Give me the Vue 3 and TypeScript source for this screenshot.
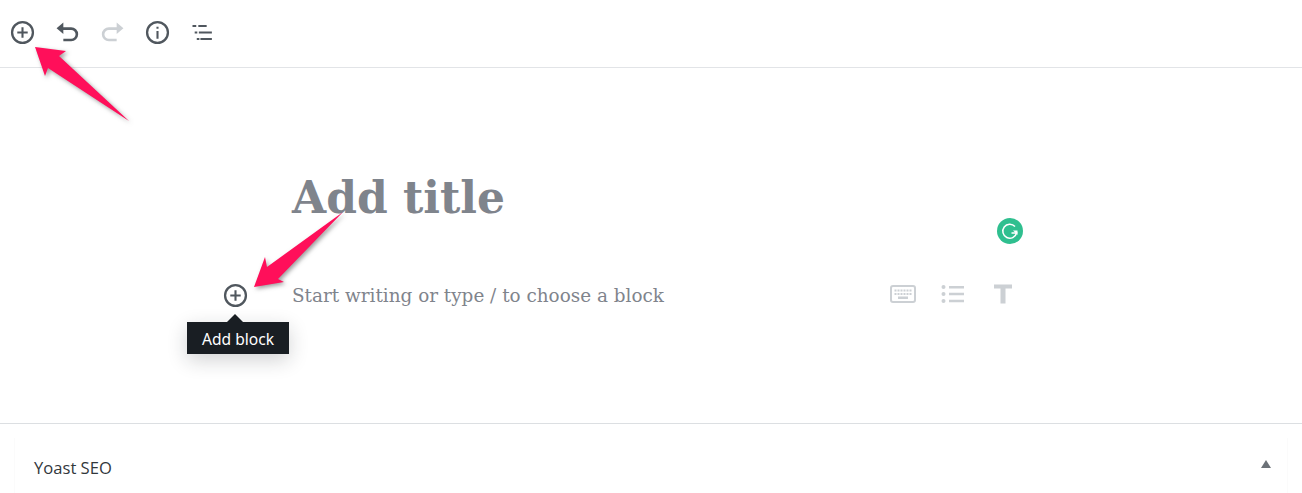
<script setup lang="ts">
interface ToolButton {
  name: string
  disabled?: boolean
}

const tools: ToolButton[] = [
  { name: 'add' },
  { name: 'undo' },
  { name: 'redo', disabled: true },
  { name: 'info' },
  { name: 'outline' },
]
</script>

<template>
  <div class="page">
    <header class="toolbar">
      <button
        v-for="tool in tools"
        :key="tool.name"
        type="button"
        class="tool"
        :class="{ disabled: tool.disabled }"
      >
        <svg v-if="tool.name === 'add'" class="icon" viewBox="0 0 24 24">
          <circle cx="12" cy="12" r="10" fill="none" stroke="currentColor" stroke-width="2.200" />
          <path d="M11 7h2v4h4v2h-4v4h-2v-4H7v-2h4z" fill="currentColor" />
        </svg>
        <svg v-else-if="tool.name === 'undo'" class="icon" viewBox="0 0 24 24">
          <path d="M8 2.500 1.500 8 8 13.500V9.500h7.500a4 4 0 0 1 0 8.500H8v2.500h7.500a6.500 6.500 0 0 0 0-13.500H8z" fill="currentColor" />
        </svg>
        <svg v-else-if="tool.name === 'redo'" class="icon" viewBox="0 0 24 24">
          <path d="M16 2.500 22.500 8 16 13.500V9.500H8.500a4 4 0 0 0 0 8.500H16v2.500H8.500a6.500 6.500 0 0 1 0-13.500H16z" fill="currentColor" />
        </svg>
        <svg v-else-if="tool.name === 'info'" class="icon" viewBox="0 0 24 24">
          <circle cx="12" cy="12" r="10" fill="none" stroke="currentColor" stroke-width="2.200" />
          <path d="M11 10.500h2V18h-2zM11 6.500h2v2h-2z" fill="currentColor" />
        </svg>
        <svg v-else class="icon" viewBox="0 0 24 24">
          <path d="M2.400 4.800H6v1.900H2.400zM8 4.800h8v1.900H8zM4.500 11H7v2H4.500zM8.500 11H21v2H8.500zM6.500 17.300H9v1.900H6.500zM10 17.300h11v1.900H10z" fill="currentColor" />
        </svg>
      </button>
    </header>

    <main class="editor">
      <h1 class="title">Add title</h1>
      <div class="block-row">
        <div class="inserter">
          <svg class="icon" viewBox="0 0 24 24">
            <circle cx="12" cy="12" r="10" fill="none" stroke="currentColor" stroke-width="2.200" />
            <path d="M11 7h2v4h4v2h-4v4h-2v-4H7v-2h4z" fill="currentColor" />
          </svg>
          <div class="tooltip">Add block</div>
        </div>
        <p class="placeholder">Start writing or type / to choose a block</p>
        <div class="block-types">
          <svg class="type-icon" viewBox="0 0 26 20">
            <rect x="1" y="2" width="24" height="16" rx="2" fill="none" stroke="currentColor" stroke-width="2" />
            <path d="M4.500 5.500h2v2h-2zM7.500 5.500h2v2h-2zM10.500 5.500h2v2h-2zM13.500 5.500h2v2h-2zM16.500 5.500h2v2h-2zM19.500 5.500h2v2h-2zM4.500 9h2v2h-2zM7.500 9h2v2h-2zM10.500 9h2v2h-2zM13.500 9h2v2h-2zM16.500 9h2v2h-2zM19.500 9h2v2h-2zM8 12.500h10v2.500H8z" fill="currentColor" />
          </svg>
          <svg class="type-icon" viewBox="0 0 26 20">
            <circle cx="3.500" cy="3" r="2" fill="currentColor" />
            <circle cx="3.500" cy="10" r="2" fill="currentColor" />
            <circle cx="3.500" cy="17" r="2" fill="currentColor" />
            <path d="M9 2h15v2.500H9zM9 8.800h15v2.500H9zM9 15.700h15v2.500H9z" fill="currentColor" />
          </svg>
          <svg class="type-icon" viewBox="0 0 26 20">
            <path d="M4 .5h18v4h-6.500V19.500h-5V4.500H4z" fill="currentColor" />
          </svg>
        </div>
      </div>
      <div class="grammarly">
        <svg viewBox="0 0 26 26" width="26" height="26">
          <circle cx="13" cy="13" r="13" fill="#2fbf8f" />
          <path d="M18 8.500a7 7 0 1 0 1.600 6.500H14.500" fill="none" stroke="#fff" stroke-width="1.500" />
          <path d="M16 12.500h4.500v4.500z" fill="#fff" />
        </svg>
      </div>
    </main>

    <section class="metabox">
      <div class="metabox-head">
        <span class="metabox-title">Yoast SEO</span>
        <span class="caret"></span>
      </div>
    </section>

    <svg class="arrows" viewBox="0 0 1302 493" width="1302" height="493">
      <polygon points="35,47 66,51 59,56 129,121 48,68 45,76" />
      <polygon points="254,287 265,257 267,267 343,212 278,279 284,282" />
    </svg>
  </div>
</template>

<style>
html,
body {
  margin: 0;
  background: #fff;
}
</style>

<style scoped>
.page {
  position: relative;
  width: 1302px;
  height: 493px;
  overflow: hidden;
  background: #fff;
  color: #50575e;
}

.toolbar {
  display: flex;
  align-items: center;
  box-sizing: border-box;
  height: 68px;
  padding-bottom: 3px;
  border-bottom: 1px solid #e2e4e7;
}

.tool {
  display: flex;
  align-items: center;
  justify-content: center;
  width: 45px;
  height: 45px;
  padding: 0;
  border: 0;
  background: none;
  color: #50575e;
}

.tool.disabled {
  color: #ccd0d4;
}

.icon {
  display: block;
  width: 25px;
  height: 25px;
}

.editor {
  position: relative;
  box-sizing: border-box;
  height: 356px;
  padding-left: 187px;
  border-bottom: 1px solid #dcdfe2;
}

.title {
  margin: 0;
  padding: 101px 0 0 105px;
  font-family: 'DejaVu Serif', serif;
  font-size: 44px;
  font-weight: 700;
  line-height: 58px;
  color: #7f848c;
}

.block-row {
  display: flex;
  align-items: center;
  height: 40px;
  margin-top: 48px;
}

.inserter {
  position: relative;
  display: flex;
  justify-content: center;
  width: 96px;
  margin-right: 9px;
  color: #50575e;
}

.tooltip {
  position: absolute;
  top: 39px;
  left: 0;
  width: 102px;
  height: 32px;
  line-height: 34px;
  text-align: center;
  font-family: 'Noto Sans', sans-serif;
  font-size: 15.6px;
  color: #fff;
  background: #191e23;
  box-shadow: 0 6px 20px rgba(25, 30, 35, 0.2);
}

.tooltip::before {
  content: '';
  position: absolute;
  top: -8px;
  left: 40px;
  border-left: 8px solid transparent;
  border-right: 8px solid transparent;
  border-bottom: 8px solid #191e23;
}

.placeholder {
  flex: 0 0 auto;
  width: 598px;
  margin: 0;
  font-family: 'DejaVu Serif', serif;
  font-size: 18.4px;
  color: #7f848c;
}

.block-types {
  display: flex;
  gap: 24px;
  margin-top: -2px;
  color: #ccd0d4;
}

.type-icon {
  display: block;
  width: 26px;
  height: 20px;
}

.grammarly {
  position: absolute;
  top: 150px;
  left: 997px;
  height: 26px;
}

.metabox {
  padding: 14px 14px 0;
}

.metabox-head {
  display: flex;
  align-items: center;
  justify-content: space-between;
  height: 58px;
  padding: 0 16px 0 19px;
  border-left: 1px solid #fbfbfb;
  border-right: 1px solid #fbfbfb;
}

.metabox-title {
  font-family: 'Open Sans', sans-serif;
  font-size: 16.6px;
  color: #32373c;
}

.caret {
  margin-bottom: 6px;
  border-left: 5px solid transparent;
  border-right: 5px solid transparent;
  border-bottom: 8px solid #6c7278;
}

.arrows {
  position: absolute;
  top: 0;
  left: 0;
  fill: #ff0f5a;
  pointer-events: none;
  filter: drop-shadow(2px 2px 2px rgba(60, 60, 60, 0.5));
}
</style>
